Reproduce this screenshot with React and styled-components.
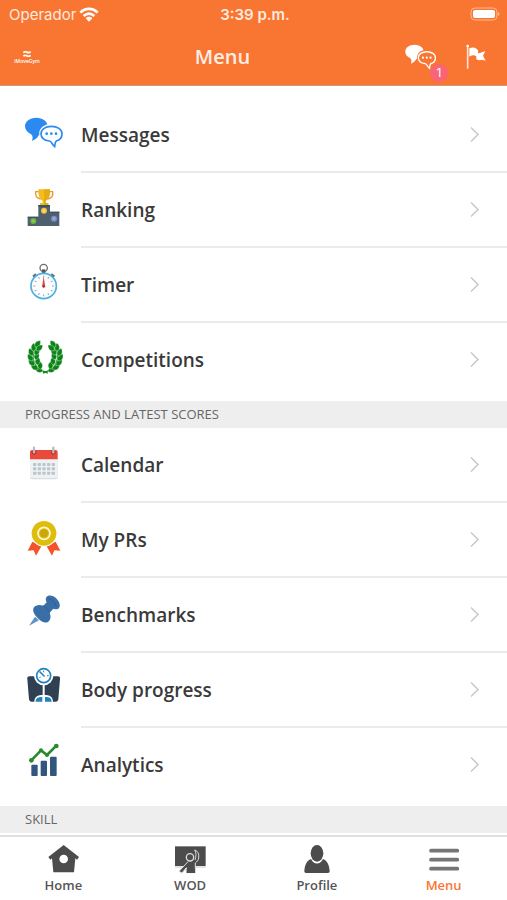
import React from "react";
import styled, { createGlobalStyle } from "styled-components";

const GlobalStyle = createGlobalStyle`
  * {
    box-sizing: border-box;
  }

  body {
    margin: 0;
    background: #fff;
    font-family: "Open Sans", "Noto Sans", sans-serif;
  }
`;

const Screen = styled.div`
  display: flex;
  flex-direction: column;
  height: 100vh;
  overflow: hidden;
`;

const Header = styled.header`
  flex: none;
  color: #fff;
  background: #f97632;
  border-bottom: 1px solid #cf9a7c;
`;

const StatusBar = styled.div`
  display: grid;
  grid-template-columns: 1fr auto 1fr;
  align-items: center;
  height: 28px;
  padding: 0 6px 0 9px;
  font-family: Inter, sans-serif;
  font-size: 15px;
  color: #ffeadf;
`;

const Carrier = styled.span`
  display: flex;
  align-items: center;
  gap: 3px;
`;

const Clock = styled.time`
  font-weight: 600;
`;

const BatteryIcon = styled.svg`
  justify-self: end;
`;

const NavBar = styled.div`
  display: flex;
  align-items: center;
  height: 57px;
  padding: 0 20px 0 14px;
`;

const Logo = styled.a`
  display: flex;
  flex-direction: column;
  align-items: center;
  width: 26px;
  color: #fff;
  font-size: 5px;
  font-weight: 600;
  line-height: 6px;
  text-decoration: none;
`;

const Title = styled.h1`
  flex: 1;
  margin: 0;
  color: #ffeee5;
  font-size: 20px;
  font-weight: 600;
  line-height: 28px;
  text-align: center;
`;

const HeaderActions = styled.div`
  display: flex;
  align-items: center;
  gap: 29px;
`;

const IconButton = styled.button`
  position: relative;
  display: block;
  padding: 0;
  border: 0;
  background: none;
  color: inherit;
  cursor: pointer;

  svg {
    display: block;
  }
`;

const Badge = styled.span`
  position: absolute;
  right: -12px;
  bottom: -12px;
  width: 18px;
  height: 18px;
  border-radius: 50%;
  background: #fb6377;
  font-family: Inter, sans-serif;
  font-size: 12px;
  line-height: 18px;
  text-align: center;
`;

const Content = styled.main`
  flex: 1;
  min-height: 0;
  padding-top: 12px;
  overflow-x: hidden;
  overflow-y: auto;
  scrollbar-width: none;
`;

const List = styled.ul`
  margin: 0;
  padding: 0 0 3px;
  list-style: none;
`;

const Row = styled.a`
  display: flex;
  align-items: center;
  gap: 18px;
  padding-left: 25px;
  color: #3a3a3a;
  text-decoration: none;
`;

const RowIcon = styled.svg`
  flex: none;
  margin-bottom: 6px;
  overflow: visible;
`;

const RowBody = styled.span`
  display: flex;
  flex: 1;
  align-items: center;
  justify-content: space-between;
  height: 75px;
  padding-right: 27px;
  border-bottom: 2px solid #ebebeb;
  font-size: 19px;
  font-weight: 600;

  li:last-child & {
    border-color: transparent;
  }
`;

const SectionTitle = styled.h2`
  height: 27px;
  margin: 0;
  padding-left: 25px;
  background: #eee;
  color: #666;
  font-size: 13px;
  font-weight: 400;
  line-height: 27px;
  text-transform: uppercase;
`;

const TabBar = styled.nav`
  display: flex;
  flex: none;
  height: 65px;
  border-top: 2px solid #e0e0e0;
  background: #fff;
`;

const Tab = styled.a`
  display: flex;
  flex: 1;
  flex-direction: column;
  align-items: center;
  gap: 2px;
  padding-top: 7px;
  color: ${(props) => (props.$active ? "#f97632" : "#555")};
  font-size: 13px;
  font-weight: 600;
  line-height: 18px;
  text-decoration: none;
`;

function Chats({ color, hollow }) {
  return (
    <>
      <path
        d="M34 11C14 11 0 22 0 37c0 10 7 18 17 23 5 3 8 9 4 21 10-4 17-10 20-17 18-1 27-13 27-27C68 22 53 11 34 11z"
        fill={color}
      />
      <path
        d="M79 35c-18 0-31 10-31 24 0 12 11 21 25 23 8 1 9 11 18 18 1-9 0-15 4-18 10-4 17-12 17-23 0-14-14-24-33-24z"
        fill={hollow}
        stroke={hollow}
        strokeWidth="11"
      />
      <path
        d="M79 37c-17 0-31 9-31 22 0 12 11 20 25 22 7 1 8 11 16 17 1-8 1-14 5-17 10-3 17-11 17-22 0-13-14-22-32-22z"
        fill={hollow}
        stroke={color}
        strokeWidth="5"
      />
      <g fill={color}>
        <circle cx="65" cy="59" r="4" />
        <circle cx="79" cy="59" r="4" />
        <circle cx="93" cy="59" r="4" />
      </g>
    </>
  );
}

function Podium() {
  return (
    <>
      <path d="M42 8H32c-2 12 3 20 15 22M73 8h10c2 12-3 20-15 22" fill="none" stroke="#e9972f" strokeWidth="4" />
      <path d="M40 1h35c1 19-3 30-13 34v7h8v7H45v-7h8v-7C43 31 39 20 40 1z" fill="#f2bd20" />
      <path d="M57 1h18c1 19-3 30-13 34v7h8v7H57z" fill="#e5ad13" />
      <path d="M40 48h35v20h28v43H8V83h32z" fill="#4e606d" />
      <path d="M40 48h35v5H40zM75 68h28v4H75zM8 83h32v4H8z" fill="#3f505c" />
      <circle cx="25" cy="96" r="9" fill="#6bb545" />
      <circle cx="25" cy="96" r="4" fill="#8dcc62" />
      <circle cx="57" cy="65" r="9" fill="#f1c63d" />
      <circle cx="57" cy="65" r="4" fill="#f8df80" />
      <circle cx="87" cy="89" r="9" fill="#7f8ccb" />
      <circle cx="87" cy="89" r="4" fill="#9da8dc" />
    </>
  );
}

const ticks = [0, 30, 60, 90, 120, 150, 180, 210, 240, 270, 300, 330];

function Stopwatch() {
  return (
    <>
      <circle cx="56" cy="12" r="11" fill="none" stroke="#6a6e72" strokeWidth="4" />
      <path d="M51 16h10v12H51z" fill="#55595e" />
      <path d="M22 35l9-7 7 9-9 7zM90 35l-9-7-7 9 9 7z" fill="#5b6e7c" />
      <circle cx="56" cy="66" r="38" fill="#fafcfd" stroke="#4baee4" strokeWidth="5" />
      {ticks.map((angle) => (
        <path key={angle} d="M56 35v6" stroke="#9aa5ad" strokeWidth="3" transform={`rotate(${angle} 56 66)`} />
      ))}
      <path d="M56 37l4 26a5 5 0 1 1-8 0z" fill="#d94b42" />
      <circle cx="56" cy="67" r="3" fill="#8c2f2a" />
    </>
  );
}

// one branch: x, y, rotation of every leaf from the bottom to the tip
const leaves = [
  [42, 93, -74],
  [29, 85, -60],
  [20, 71, -46],
  [16, 56, -34],
  [18, 40, -22],
  [26, 25, 0],
  [38, 15, 38],
  [45, 79, -10],
  [38, 66, 6],
  [35, 51, 20],
  [36, 38, 34],
  [43, 27, 50],
];

function Branch() {
  return (
    <>
      <path d="M68 102C45 96 29 82 25 62c-2-16 2-30 12-42" fill="none" stroke="#0c8418" strokeWidth="4" />
      {leaves.map(([x, y, angle]) => (
        <path
          key={`${x}-${y}`}
          d="M0 12C-11 5-9-5 0-13 9-5 11 5 0 12z"
          fill="#0c8418"
          stroke="#fff"
          transform={`translate(${x} ${y}) rotate(${angle})`}
        />
      ))}
    </>
  );
}

function Laurel() {
  return (
    <>
      <Branch />
      <g transform="translate(122 0) scale(-1 1)">
        <Branch />
      </g>
    </>
  );
}

function Calendar() {
  return (
    <>
      <path d="M15 42h83v58a6 6 0 0 1-6 6H21a6 6 0 0 1-6-6z" fill="#cfd8dc" />
      <path d="M15 42h83v55a6 6 0 0 1-6 6H21a6 6 0 0 1-6-6z" fill="#eef2f3" />
      <path d="M15 46V24a6 6 0 0 1 6-6h71a6 6 0 0 1 6 6v22z" fill="#e84a3b" />
      {[27, 85].map((x) => (
        <g key={x}>
          <circle cx={x} cy="25" r="7" fill="#b93327" />
          <path d={`M${x} 11v14`} stroke="#b4bcc2" strokeWidth="7" strokeLinecap="round" />
        </g>
      ))}
      {[61, 74, 87].map((y) =>
        [29, 43, 57, 71, 85].map((x) => (
          <rect key={`${x}-${y}`} x={x - 5} y={y - 4} width="10" height="9" rx="2" fill="#bcc6cc" />
        ))
      )}
    </>
  );
}

function Medal() {
  return (
    <>
      <path d="M22 68L8 95l18-1 7 16 17-30zM92 68l14 27-18-1-7 16-17-30z" fill="#f4532b" />
      <circle cx="57" cy="43" r="40" fill="#fff" />
      <circle cx="57" cy="43" r="37" fill="#dfbd0b" />
      <circle cx="57" cy="43" r="18" fill="none" stroke="#fff8d8" strokeWidth="5" />
      <circle cx="57" cy="43" r="12" fill="#c9a70b" />
    </>
  );
}

function Pin() {
  return (
    <>
      <path d="M30 68l12 11-30 16z" fill="#5c93c8" />
      <path
        d="M64 10c5-9 20-7 31 4 10 11 13 24 5 30-5 3-10 2-15 0L74 56c5 12 3 21-4 27-9 6-20 1-30-9-11-11-19-23-14-33 6-9 18-10 29-6l10-10c-3-5-4-10-1-15z"
        fill="#396fa6"
      />
      <path d="M70 14c7 0 22 13 24 24" fill="none" stroke="#2b5d92" strokeWidth="3" />
      <path d="M55 35c8 4 15 11 19 21" fill="none" stroke="#2b5d92" strokeWidth="2" />
    </>
  );
}

function Scale() {
  return (
    <>
      <path d="M14 22h84c6 0 8 3 7 9l-5 60c-1 5-3 7-8 7H20c-5 0-7-2-8-7L7 31c-1-6 1-9 7-9z" fill="#2e4052" />
      <circle cx="56" cy="20" r="29" fill="#fff" />
      <path d="M53 42h6v38h-6zM28 99c0-16 9-21 28-21s28 5 28 21z" fill="#fff" />
      <circle cx="56" cy="20" r="21" fill="#fff" stroke="#2581be" strokeWidth="5" />
      <path d="M45 9l12 12" stroke="#2581be" strokeWidth="5" strokeLinecap="round" />
      <path d="M56 5v5M71 20h-5M43 26l4-2" stroke="#2581be" strokeWidth="3" />
      <path d="M32 98c0-10 6-14 20-14v14zM80 98c0-10-6-14-20-14v14z" fill="#2581be" />
    </>
  );
}

function Growth() {
  return (
    <>
      <g fill="#31577f">
        <rect x="19" y="62" width="19" height="34" rx="3" />
        <rect x="47" y="50" width="19" height="46" rx="3" />
        <rect x="75" y="38" width="20" height="58" rx="3" />
      </g>
      <path d="M19 49l29-30 18 14 28-28" fill="none" stroke="#278a2c" strokeWidth="8" strokeLinejoin="round" />
      <g fill="#278a2c">
        <circle cx="19" cy="49" r="7" />
        <circle cx="48" cy="19" r="6" />
        <circle cx="66" cy="33" r="6" />
        <circle cx="94" cy="6" r="7" />
      </g>
    </>
  );
}

function HomeIcon() {
  return (
    <path
      d="M50 3l46 36-6 8-5-4-4 42H19l-4-42-5 4-6-8zM50 32a13 13 0 1 0 0 26 13 13 0 0 0 0-26z"
      fill="#4c4c4c"
    />
  );
}

function WodIcon() {
  return (
    <>
      <path d="M3 7h92v59H3z" fill="#4c4c4c" />
      <path d="M3 69h92" stroke="#aaa" strokeWidth="2" />
      <path
        d="M62 18c10 3 14 12 12 24-1 7-5 11-10 15v29H37V71L24 87l-9-5 27-29"
        fill="#4c4c4c"
        stroke="#ddd"
        strokeWidth="3"
        strokeLinejoin="round"
      />
      <path d="M38 75h25v12H38z" fill="#4c4c4c" />
      <path d="M62 18c5 8 5 19 1 30" fill="none" stroke="#ddd" strokeWidth="3" />
      <circle cx="48" cy="40" r="11" fill="#4c4c4c" stroke="#ddd" strokeWidth="4" />
    </>
  );
}

function ProfileIcon() {
  return (
    <>
      <path d="M10 82c1-18 7-32 20-37 9 18 27 18 36 0 13 5 19 19 20 37 0 3-2 5-5 5H15c-3 0-5-2-5-5z" fill="#4c4c4c" />
      <ellipse cx="48" cy="28" rx="19" ry="25" fill="#4c4c4c" />
    </>
  );
}

function MenuIcon() {
  return <path d="M9 20h79M9 47h79M9 74h79" stroke="#757575" strokeWidth="11" strokeLinecap="round" />;
}

const activities = [
  { label: "Messages", icon: <Chats color="#2a8af0" hollow="#fff" /> },
  { label: "Ranking", icon: <Podium /> },
  { label: "Timer", icon: <Stopwatch /> },
  { label: "Competitions", icon: <Laurel /> },
];

const progress = [
  { label: "Calendar", icon: <Calendar /> },
  { label: "My PRs", icon: <Medal /> },
  { label: "Benchmarks", icon: <Pin /> },
  { label: "Body progress", icon: <Scale /> },
  { label: "Analytics", icon: <Growth /> },
];

const tabs = [
  { label: "Home", icon: <HomeIcon /> },
  { label: "WOD", icon: <WodIcon /> },
  { label: "Profile", icon: <ProfileIcon /> },
  { label: "Menu", icon: <MenuIcon />, active: true },
];

function MenuList({ items }) {
  return (
    <List>
      {items.map((item) => (
        <li key={item.label}>
          <Row href="#">
            <RowIcon width="38" height="37" viewBox="0 0 114 111" aria-hidden="true">
              {item.icon}
            </RowIcon>
            <RowBody>
              {item.label}
              <svg width="11" height="17" viewBox="0 0 22 34" aria-hidden="true">
                <path d="M4 3l14 14L4 31" fill="none" stroke="#c8c8c8" strokeWidth="3" />
              </svg>
            </RowBody>
          </Row>
        </li>
      ))}
    </List>
  );
}

function App() {
  return (
    <Screen>
      <GlobalStyle />
      <Header>
        <StatusBar>
          <Carrier>
            Operador
            <svg width="20" height="15" viewBox="0 0 60 45" fill="none" stroke="#fff" strokeWidth="8" aria-hidden="true">
              <path d="M4 17c15-15 37-15 52 0M14 27c10-9 22-9 32 0" />
              <path d="M20 34c6-6 14-6 20 0L30 44z" fill="#fff" stroke="none" />
            </svg>
          </Carrier>
          <Clock>3:39 p.m.</Clock>
          <BatteryIcon width="31" height="14" viewBox="0 0 31 14" aria-hidden="true">
            <rect x="1" y="1" width="26" height="12" rx="4" fill="none" stroke="#fcb893" />
            <rect x="3" y="3" width="22" height="8" rx="2" fill="#fff" />
            <path d="M28 5c2 1 2 3 0 4z" fill="#fcb893" />
          </BatteryIcon>
        </StatusBar>
        <NavBar>
          <Logo href="#">
            <svg width="8" height="8" viewBox="0 0 24 24" fill="none" stroke="#fff" strokeWidth="5" aria-hidden="true">
              <path d="M1 8c7-9 13 6 22-3M1 19c7-9 13 6 22-3" />
            </svg>
            iMoveGym
          </Logo>
          <Title>Menu</Title>
          <HeaderActions>
            <IconButton type="button" aria-label="Messages">
              <svg width="31" height="26" viewBox="-1 9 114 95" aria-hidden="true">
                <Chats color="#fff" hollow="#f97632" />
              </svg>
              <Badge>1</Badge>
            </IconButton>
            <IconButton type="button" aria-label="Flag">
              <svg width="22" height="26" viewBox="0 0 66 78" aria-hidden="true">
                <path d="M8 8v66" stroke="#ffe3d4" strokeWidth="5" />
                <circle cx="8" cy="6" r="4" fill="#fff" />
                <path d="M13 13c10-5 20-3 26 6v8c5 3 9-3 22-5l-7 13 8 15c-11-5-18 2-28-4v-9c-6-4-13-4-21 1z" fill="#fff" />
              </svg>
            </IconButton>
          </HeaderActions>
        </NavBar>
      </Header>
      <Content>
        <MenuList items={activities} />
        <SectionTitle>Progress and latest scores</SectionTitle>
        <MenuList items={progress} />
        <SectionTitle>Skill</SectionTitle>
      </Content>
      <TabBar>
        {tabs.map((tab) => (
          <Tab key={tab.label} href="#" $active={tab.active}>
            <svg width="32" height="30" viewBox="0 0 96 90" fillRule="evenodd" aria-hidden="true">
              {tab.icon}
            </svg>
            {tab.label}
          </Tab>
        ))}
      </TabBar>
    </Screen>
  );
}

export default App;
